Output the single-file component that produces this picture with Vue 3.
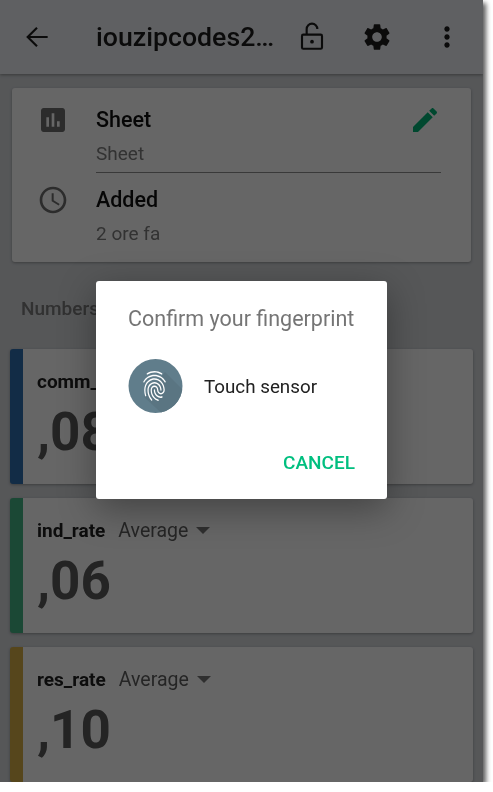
<template>
  <div class="screen">
    <header class="topbar">
      <button class="icon-btn back">
        <svg width="32" height="32" viewBox="0 0 24 24"><path d="M20 12H5M12 5l-7 7 7 7" fill="none" stroke="currentColor" stroke-width="1.6" /></svg>
      </button>
      <h1 class="title">iouzipcodes2…</h1>
      <button class="icon-btn">
        <svg width="32" height="32" viewBox="0 0 24 24" fill="none" stroke="currentColor" stroke-width="1.6">
          <rect x="4.5" y="10.2" width="15" height="10.6" rx="1" />
          <path d="M8 10.2V6a4 4 0 0 1 8 0" />
          <circle cx="12" cy="15.5" r="1.4" fill="currentColor" stroke="none" />
        </svg>
      </button>
      <button class="icon-btn gear">
        <svg width="32" height="32" viewBox="0 0 24 24"><path fill="currentColor" d="M19.14 12.94c.04-.3.06-.61.06-.94 0-.32-.02-.64-.07-.94l2.03-1.58c.18-.14.23-.41.12-.61l-1.92-3.32c-.12-.22-.37-.29-.59-.22l-2.39.96c-.5-.38-1.03-.7-1.62-.94l-.36-2.54c-.04-.24-.24-.41-.48-.41h-3.84c-.24 0-.43.17-.47.41l-.36 2.54c-.59.24-1.13.57-1.62.94l-2.39-.96c-.22-.08-.47 0-.59.22L2.74 8.87c-.12.21-.08.47.12.61l2.03 1.58c-.05.3-.09.63-.09.94s.02.64.07.94l-2.03 1.58c-.18.14-.23.41-.12.61l1.92 3.32c.12.22.37.29.59.22l2.39-.96c.5.38 1.03.7 1.62.94l.36 2.54c.05.24.24.41.48.41h3.84c.24 0 .44-.17.47-.41l.36-2.54c.59-.24 1.13-.56 1.62-.94l2.39.96c.22.08.47 0 .59-.22l1.92-3.32c.12-.22.07-.47-.12-.61l-2.01-1.58zM12 15.6c-1.98 0-3.6-1.62-3.6-3.6s1.62-3.6 3.6-3.6 3.6 1.62 3.6 3.6-1.62 3.6-3.6 3.6z" /></svg>
      </button>
      <button class="icon-btn more">
        <svg width="32" height="32" viewBox="0 0 24 24"><path fill="currentColor" d="M12 8c1.1 0 2-.9 2-2s-.9-2-2-2-2 .9-2 2 .9 2 2 2zm0 2c-1.1 0-2 .9-2 2s.9 2 2 2 2-.9 2-2-.9-2-2-2zm0 6c-1.1 0-2 .9-2 2s.9 2 2 2 2-.9 2-2-.9-2-2-2z" /></svg>
      </button>
    </header>

    <section class="info-card">
      <div class="info-row">
        <svg class="info-icon" width="32" height="32" viewBox="0 0 24 24"><path fill="currentColor" d="M19 3H5c-1.1 0-2 .9-2 2v14c0 1.1.9 2 2 2h14c1.1 0 2-.9 2-2V5c0-1.1-.9-2-2-2zM9 17H7v-7h2v7zm4 0h-2V7h2v10zm4 0h-2v-4h2v4z" /></svg>
        <div class="info-text underlined">
          <div class="info-label">Sheet</div>
          <div class="info-value">Sheet</div>
          <svg class="pencil" width="32" height="32" viewBox="0 0 24 24"><path fill="currentColor" d="M3 17.25V21h3.75L17.81 9.94l-3.75-3.75L3 17.25zM20.71 7.04c.39-.39.39-1.02 0-1.41l-2.34-2.34c-.39-.39-1.02-.39-1.41 0l-1.83 1.83 3.75 3.75 1.83-1.83z" /></svg>
        </div>
      </div>
      <div class="info-row second">
        <svg class="info-icon" width="32" height="32" viewBox="0 0 24 24"><path fill="currentColor" d="M11.99 2C6.47 2 2 6.48 2 12s4.47 10 9.99 10C17.52 22 22 17.52 22 12S17.52 2 11.99 2zM12 20c-4.42 0-8-3.58-8-8s3.58-8 8-8 8 3.58 8 8-3.58 8-8 8zm.5-13H11v6l5.25 3.15.75-1.23-4.5-2.67z" /></svg>
        <div class="info-text">
          <div class="info-label">Added</div>
          <div class="info-value">2 ore fa</div>
        </div>
      </div>
    </section>

    <h2 class="section-title">Numbers</h2>

    <div class="metrics">
      <article v-for="m in metrics" :key="m.name" class="metric" :style="{ borderLeftColor: m.color }">
        <div class="metric-head">
          <span class="metric-name">{{ m.name }}</span>
          <span class="metric-select">Average<i class="caret"></i></span>
        </div>
        <div class="metric-value">{{ m.value }}</div>
      </article>
    </div>

    <div class="scrim">
      <div class="dialog">
        <div class="dialog-title">Confirm your fingerprint</div>
        <div class="dialog-body">
          <svg width="55" height="54" viewBox="0 0 55 54">
            <defs>
              <clipPath id="disc"><circle cx="27.5" cy="27" r="27" /></clipPath>
            </defs>
            <circle cx="27.5" cy="27" r="27" fill="#607d8b" />
            <path d="M16 38 L37 13 L62 38 L40 60 Z" fill="#5a7582" clip-path="url(#disc)" />
            <g transform="translate(11.5 9) scale(1.25 1.5)">
              <path fill="#fff" d="M17.81 4.47c-.08 0-.16-.02-.23-.06C15.66 3.42 14 3 12.01 3c-1.98 0-3.86.47-5.57 1.41-.24.13-.54.04-.68-.2-.13-.24-.04-.55.2-.68C7.82 2.52 9.86 2 12.01 2c2.13 0 3.99.47 6.03 1.52.25.13.34.43.21.67-.09.18-.26.28-.44.28zM3.5 9.72c-.1 0-.2-.03-.29-.09-.23-.16-.28-.47-.12-.7.99-1.4 2.25-2.5 3.75-3.27C9.98 4.04 14 4.03 17.15 5.65c1.5.77 2.76 1.86 3.75 3.25.16.22.11.54-.12.7-.23.16-.54.11-.7-.12-.9-1.26-2.04-2.25-3.39-2.94-2.87-1.47-6.54-1.47-9.4.01-1.36.7-2.5 1.7-3.4 2.96-.08.14-.23.21-.39.21zm6.25 12.07c-.13 0-.26-.05-.35-.15-.87-.87-1.34-1.43-2.01-2.64-.69-1.23-1.05-2.73-1.05-4.34 0-2.97 2.54-5.39 5.66-5.39s5.66 2.42 5.66 5.39c0 .28-.22.5-.5.5s-.5-.22-.5-.5c0-2.42-2.09-4.39-4.66-4.39-2.57 0-4.66 1.97-4.66 4.39 0 1.44.32 2.77.93 3.85.64 1.15 1.08 1.64 1.85 2.42.19.2.19.51 0 .71-.11.1-.24.15-.37.15zm7.17-1.85c-1.19 0-2.24-.3-3.1-.89-1.49-1.01-2.38-2.65-2.38-4.39 0-.28.22-.5.5-.5s.5.22.5.5c0 1.41.72 2.74 1.94 3.56.71.48 1.54.71 2.54.71.24 0 .64-.03 1.04-.1.27-.05.53.13.58.41.05.27-.13.53-.41.58-.57.11-1.07.12-1.21.12zM14.91 22c-.04 0-.09-.01-.13-.02-1.59-.44-2.63-1.03-3.72-2.1-1.4-1.39-2.17-3.24-2.17-5.22 0-1.62 1.38-2.94 3.08-2.94 1.7 0 3.08 1.32 3.08 2.94 0 1.07.93 1.94 2.08 1.94s2.08-.87 2.08-1.94c0-3.77-3.25-6.83-7.25-6.83-2.84 0-5.44 1.58-6.61 4.03-.39.81-.59 1.76-.59 2.8 0 .78.07 2.01.67 3.61.1.26-.03.55-.29.64-.26.1-.55-.04-.64-.29-.49-1.31-.73-2.61-.73-3.96 0-1.2.23-2.29.68-3.24 1.33-2.79 4.28-4.6 7.51-4.6 4.55 0 8.25 3.51 8.25 7.83 0 1.62-1.38 2.94-3.08 2.94s-3.08-1.32-3.08-2.94c0-1.07-.93-1.94-2.08-1.94s-2.08.87-2.08 1.94c0 1.71.66 3.31 1.87 4.51.95.94 1.86 1.46 3.27 1.85.27.07.42.35.35.61-.05.23-.26.38-.47.38z" />
            </g>
          </svg>
          <span class="dialog-text">Touch sensor</span>
        </div>
        <div class="dialog-actions">
          <button class="cancel">CANCEL</button>
        </div>
      </div>
    </div>
  </div>
</template>

<script setup>
const metrics = [
  { name: 'comm_rate', value: ',08', color: '#2f6fb0' },
  { name: 'ind_rate', value: ',06', color: '#45b585' },
  { name: 'res_rate', value: ',10', color: '#d8b048' },
]
</script>

<style>
html,
body {
  background: #fff;
}
</style>

<style scoped>
.screen {
  position: relative;
  width: 483px;
  height: 782px;
  overflow: hidden;
  background: #d6d9dd;
  box-shadow: 3px 3px 5px rgba(0, 0, 0, 0.65);
  font-family: Roboto, "Liberation Sans", sans-serif;
  color: #111;
  filter: blur(0.35px);
}

.topbar {
  display: flex;
  align-items: center;
  height: 74px;
  background: #eef0f4;
  box-shadow: 0 1px 3px rgba(0, 0, 0, 0.35);
  color: #1c1c1c;
}

.icon-btn {
  display: flex;
  padding: 0;
  border: none;
  background: none;
  color: inherit;
}

.icon-btn.back {
  margin-left: 21px;
}

.icon-btn.gear {
  margin-left: 33px;
}

.icon-btn.more {
  margin-left: 38px;
}

.title {
  width: 200px;
  margin: 0 0 0 43px;
  font-size: 26.7px;
  font-weight: 500;
  white-space: nowrap;
}

.info-card {
  margin: 14px 12px 0;
  padding: 16px 30px 16px 25px;
  background: #fff;
  border-radius: 3px;
  box-shadow: 0 1px 3px rgba(0, 0, 0, 0.3);
}

.info-row {
  display: flex;
  gap: 27px;
}

.info-row.second {
  margin-top: 11px;
}

.info-icon {
  flex: none;
  color: #6e6e6e;
}

.info-text {
  position: relative;
  flex: 1;
}

.underlined {
  padding-bottom: 6px;
  border-bottom: 1px solid #8e8e8e;
}

.info-label {
  font-size: 21.5px;
  font-weight: 500;
  line-height: 32px;
}

.info-value {
  margin-top: 6px;
  font-size: 19px;
  line-height: 24px;
  color: #7e7e7e;
}

.pencil {
  position: absolute;
  top: 0;
  right: 0;
  color: #00b377;
}

.section-title {
  margin: 35px 0 0 21px;
  font-size: 19px;
  font-weight: 500;
  line-height: 24px;
  color: #7a7a7a;
}

.metrics {
  display: flex;
  flex-direction: column;
  gap: 14px;
  margin: 28px 10px 0;
}

.metric {
  height: 135px;
  flex: none;
  box-sizing: border-box;
  padding: 18px 14px 0;
  background: #fff;
  border-left: 13px solid;
  border-radius: 3px;
  box-shadow: 0 1px 3px rgba(0, 0, 0, 0.3);
}

.metric-head {
  display: flex;
  align-items: center;
  gap: 13px;
  height: 28px;
}

.metric-name {
  font-size: 19px;
  font-weight: 700;
  color: #222;
}

.metric-select {
  display: flex;
  align-items: center;
  font-size: 19.5px;
  color: #5e5e5e;
}

.caret {
  margin-left: 8px;
  border-left: 7px solid transparent;
  border-right: 7px solid transparent;
  border-top: 7px solid #777;
}

.metric-value {
  margin-top: 4px;
  font-size: 53px;
  font-weight: 700;
  line-height: 66px;
  color: #5a5a5a;
}

.scrim {
  position: absolute;
  inset: 0;
  display: flex;
  align-items: center;
  justify-content: center;
  padding-bottom: 2px;
  box-sizing: border-box;
  background: rgba(0, 0, 0, 0.6);
}

.dialog {
  box-sizing: border-box;
  width: 291px;
  height: 218px;
  padding: 24px 32px 0;
  background: #fff;
  border-radius: 3px;
  box-shadow: 0 10px 36px rgba(0, 0, 0, 0.35);
}

.dialog-title {
  font-size: 21.5px;
  line-height: 28px;
  color: #757575;
  white-space: nowrap;
}

.dialog-body {
  display: flex;
  align-items: center;
  gap: 21px;
  margin-top: 26px;
}

.dialog-text {
  padding-top: 2px;
  font-size: 18.8px;
  color: #212121;
}

.dialog-actions {
  display: flex;
  justify-content: flex-end;
  margin-top: 37px;
}

.cancel {
  padding: 0;
  border: none;
  background: none;
  font-family: inherit;
  font-size: 19px;
  font-weight: 500;
  line-height: 26px;
  color: #00bf7f;
}
</style>
